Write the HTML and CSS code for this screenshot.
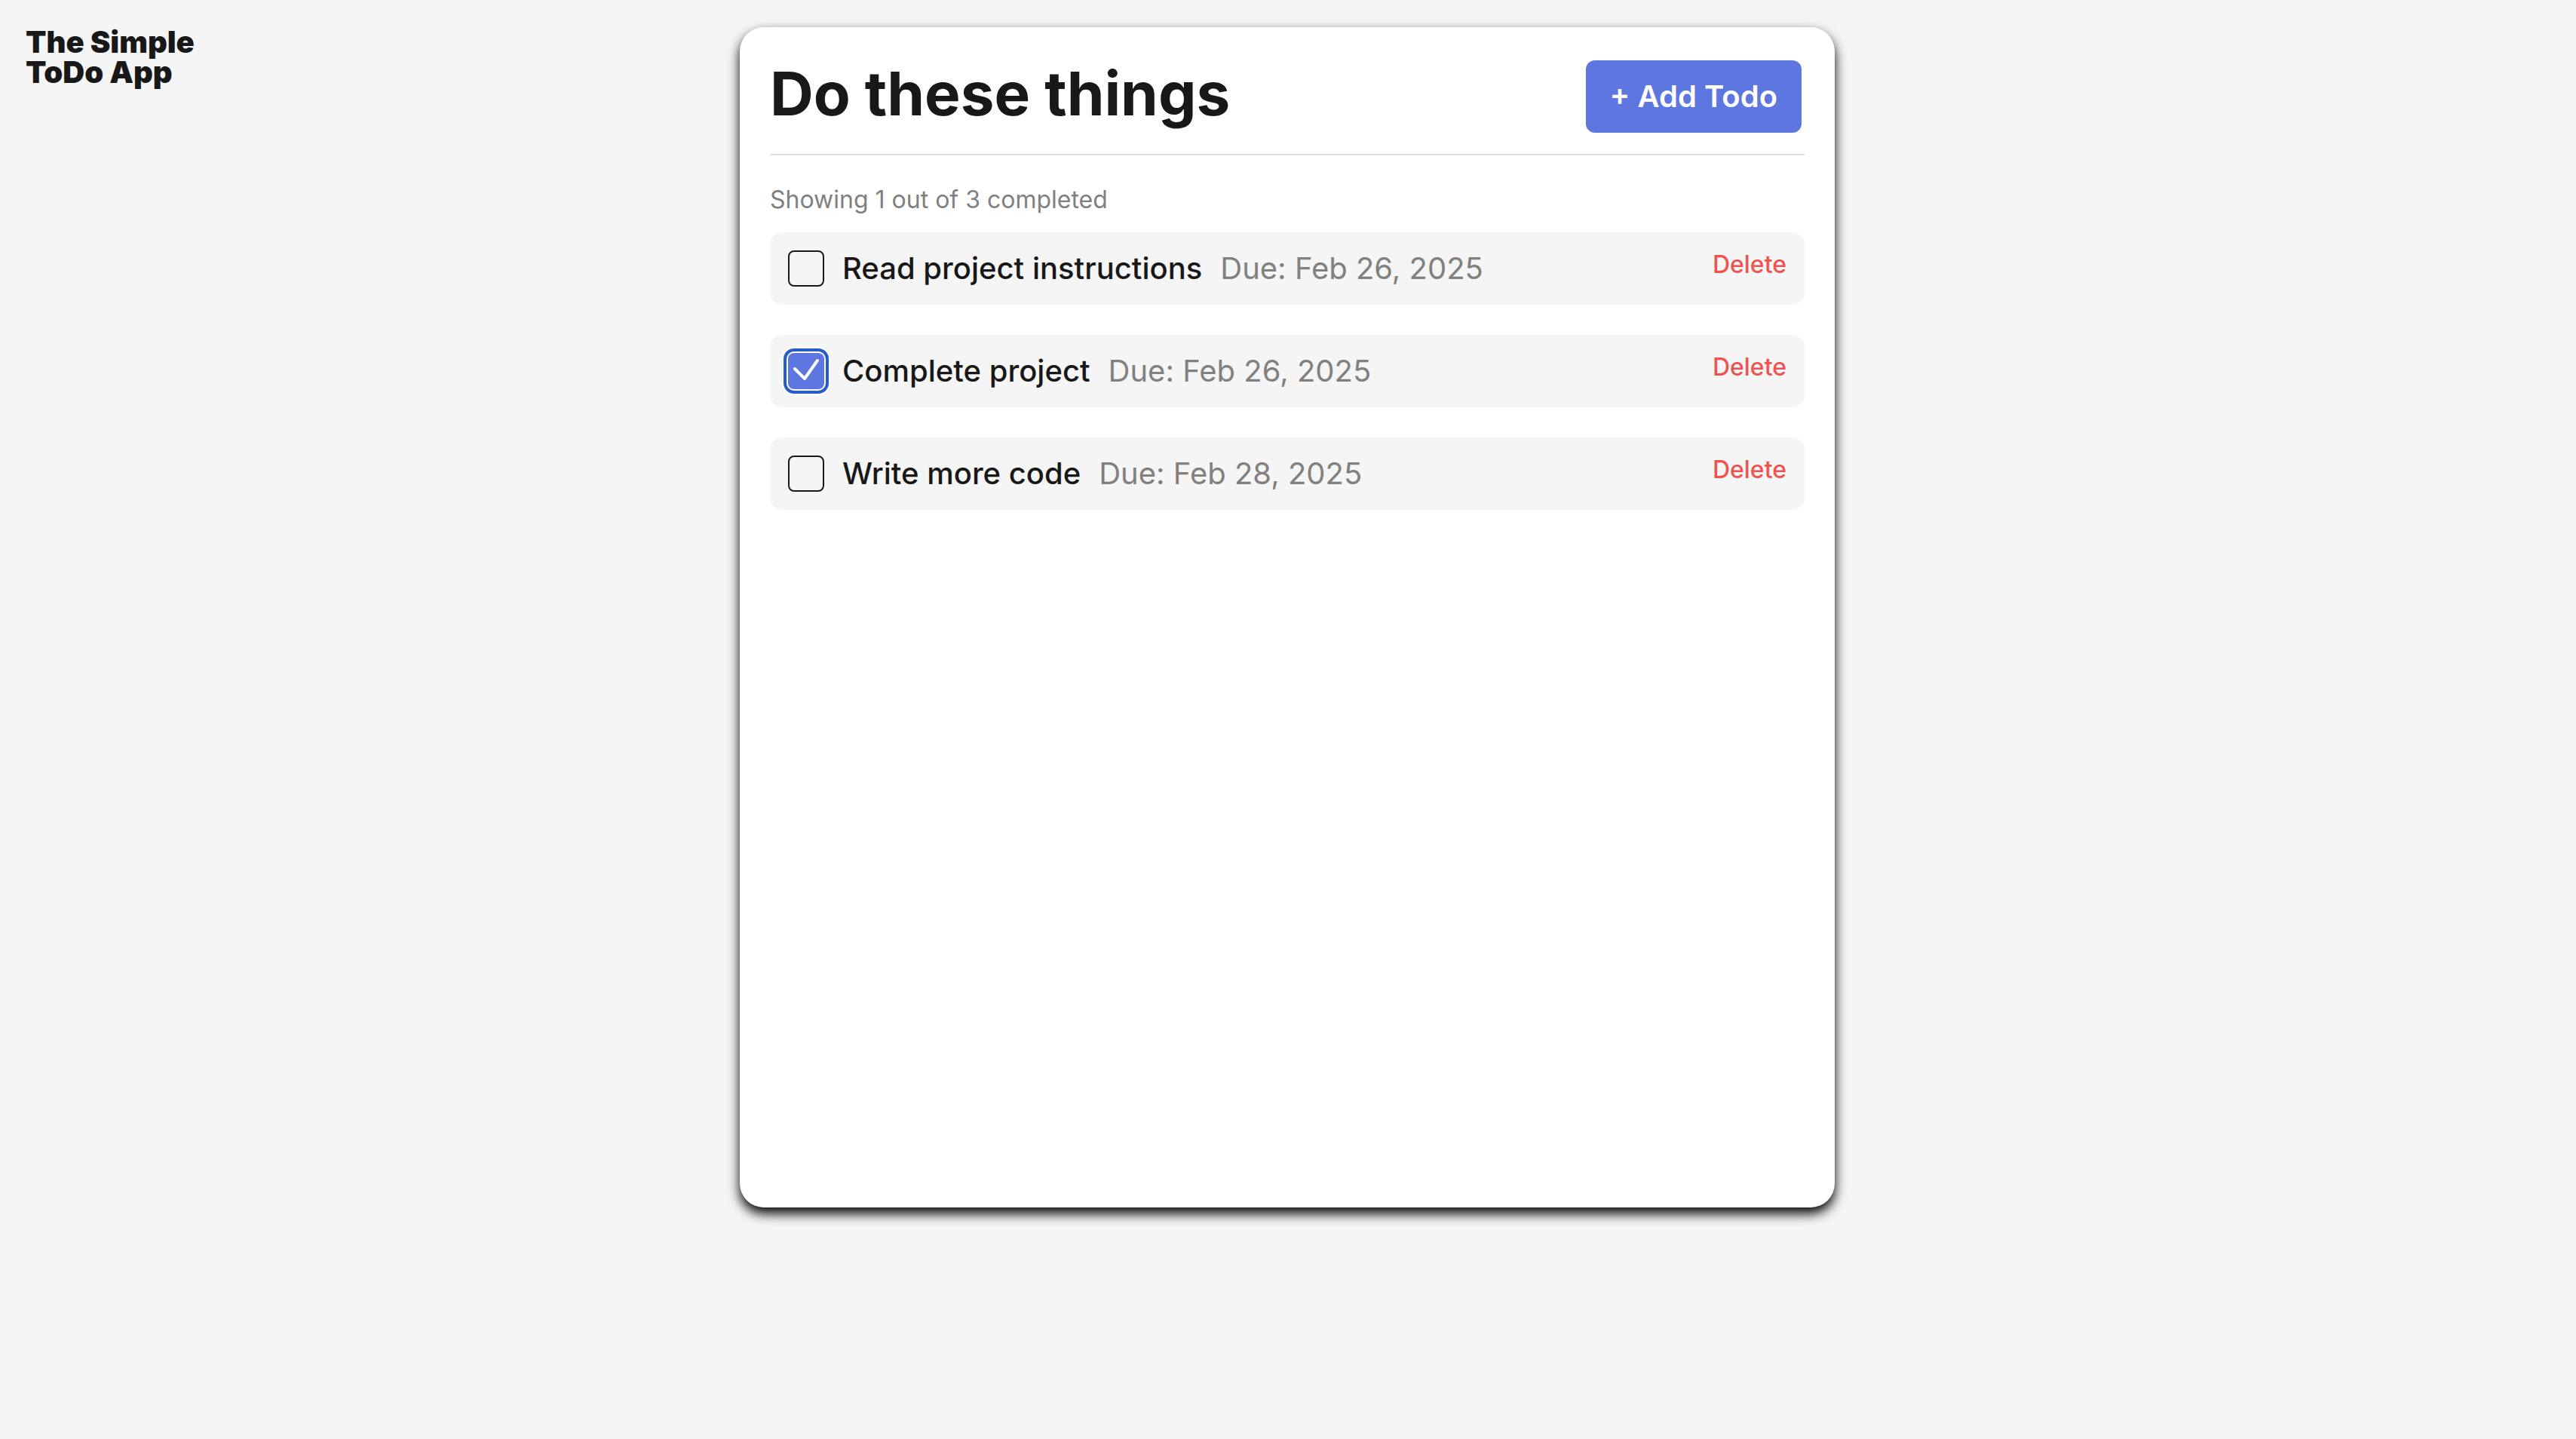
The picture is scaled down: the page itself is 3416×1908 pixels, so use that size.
FILE: index.html
```html
<!DOCTYPE html>
<html lang="en">
<head>
  <meta charset="utf-8">
  <meta name="viewport" content="width=device-width, initial-scale=1">
  <title>The Simple ToDo App</title>
  <link rel="stylesheet" href="styles.css">
</head>
<body>
  <div class="layout">
    <header class="logo">The Simple<br>ToDo App</header>
    <main class="card">
      <div class="card-header">
        <h1 class="card-title">Do these things</h1>
        <button class="add-button" type="button">+ Add Todo</button>
      </div>
      <p class="summary">Showing 1 out of 3 completed</p>
      <ul class="todo-list">
        <li class="todo">
          <input class="todo-check" type="checkbox" id="todo-1">
          <label class="todo-name" for="todo-1">Read project instructions</label>
          <span class="todo-due">Due: Feb 26, 2025</span>
          <button class="delete-button" type="button">Delete</button>
        </li>
        <li class="todo">
          <input class="todo-check is-focused" type="checkbox" id="todo-2" checked>
          <label class="todo-name" for="todo-2">Complete project</label>
          <span class="todo-due">Due: Feb 26, 2025</span>
          <button class="delete-button" type="button">Delete</button>
        </li>
        <li class="todo">
          <input class="todo-check" type="checkbox" id="todo-3">
          <label class="todo-name" for="todo-3">Write more code</label>
          <span class="todo-due">Due: Feb 28, 2025</span>
          <button class="delete-button" type="button">Delete</button>
        </li>
      </ul>
    </main>
  </div>
</body>
</html>
```
FILE: styles.css
```css
* {
  box-sizing: border-box;
}

body {
  margin: 0;
  background: #f5f5f5;
  color: #181818;
  font-family: Inter, "Liberation Sans", sans-serif;
  font-size: 40px;
  line-height: 48px;
}

button {
  border: 0;
  font-family: inherit;
  cursor: pointer;
}

.layout {
  display: grid;
  grid-template-columns: 1fr minmax(0, 1452px) 1fr;
  align-items: start;
  padding: 36px 36px 36px 34px;
}

.logo {
  font-weight: 900;
  line-height: 40px;
  white-space: nowrap;
}

.card {
  min-height: 82vh;
  padding: 40px;
  border-radius: 32px;
  background: #fff;
  box-shadow: 0 8px 16px #000;
}

.card-header {
  display: flex;
  align-items: flex-start;
  justify-content: space-between;
  padding-bottom: 24px;
  border-bottom: 2px solid #ddd;
}

.card-title {
  margin: 0;
  font-size: 80px;
  font-weight: 700;
  line-height: 96px;
}

.add-button {
  margin: 4px;
  padding: 24px 32px;
  border-radius: 12px;
  background: #5e76e0;
  color: #fff;
  font-size: 40px;
  font-weight: 600;
  line-height: 48px;
}

.summary {
  margin: 40px 0 24px;
  color: #808080;
  font-size: 32px;
  line-height: 38px;
}

.todo-list {
  display: grid;
  gap: 40px;
  margin: 0;
  padding: 0;
  list-style: none;
}

.todo {
  display: flex;
  align-items: flex-start;
  gap: 24px;
  padding: 24px;
  border-radius: 16px;
  background: #f5f5f5;
}

.todo-check {
  flex: none;
  width: 48px;
  height: 48px;
  margin: 0;
  border: 2px solid #181818;
  border-radius: 8px;
  appearance: none;
}

.todo-check:checked {
  border: 0;
  background: #5e76e0 url("data:image/svg+xml,%3Csvg xmlns='http://www.w3.org/2000/svg' viewBox='0 0 48 48' fill='none' stroke='white' stroke-width='4' stroke-linecap='round' stroke-linejoin='round'%3E%3Cpath d='M9 21 22 34 39 10'/%3E%3C/svg%3E") center / 48px no-repeat;
}

.todo-check:focus-visible,
.todo-check.is-focused {
  outline: 0;
  box-shadow: 0 0 0 2px #fff, 0 0 0 6px #275dc8, 0 0 0 8px #fff;
}

.todo-name {
  font-weight: 500;
}

.todo-due {
  color: #808080;
}

.delete-button {
  margin-left: auto;
  padding: 0;
  background: none;
  color: #ef5350;
  font-size: 32px;
  font-weight: 500;
  line-height: 38px;
}
```
